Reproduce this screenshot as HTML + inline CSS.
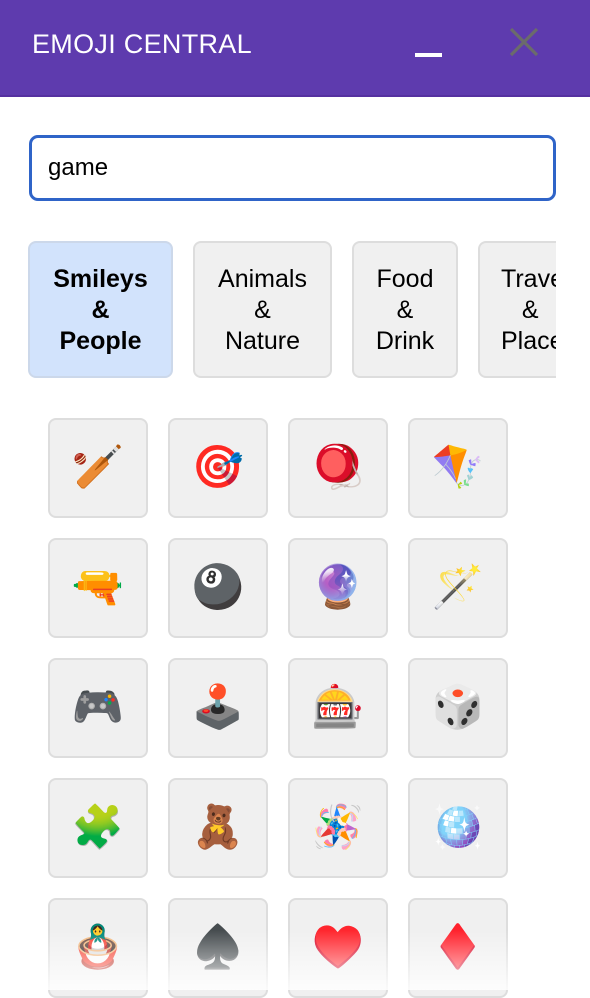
<!DOCTYPE html>
<html><head><meta charset="utf-8"><style>
*{box-sizing:border-box;margin:0;padding:0}
body{width:590px;height:990px;overflow:hidden;background:#fff;font-family:"Liberation Sans",sans-serif;position:relative}
.hdr{position:absolute;left:0;top:0;width:590px;height:97px;background:#5e3bae;border-bottom:2px solid #5530a0}
.title{position:absolute;left:32px;top:29px;color:#fff;font-size:27px;letter-spacing:0.3px}
.min{position:absolute;left:415px;top:53px;width:27px;height:4px;background:#fff}
.x{position:absolute;left:508px;top:26px}
.search{position:absolute;left:29px;top:135px;width:527px;height:66px;border:3px solid #2f64c8;border-radius:9px;font-size:24px;padding:16px 0 0 16px;color:#000}
.cat{position:absolute;top:241px;height:137px;border:2px solid #ddd;border-radius:8px;background:#f0f0f0;font-size:25px;text-align:center;line-height:31px;padding-top:21px;overflow:hidden}
.cat.sel{background:#d2e3fc;font-weight:bold;border-color:#ccd8ea}
.clip{position:absolute;left:0;top:230px;width:556px;height:160px;overflow:hidden}
.b{position:absolute;width:100px;height:100px;background:#f0f0f0;border:2px solid #ddd;border-radius:8px;font-size:42px;text-align:center;line-height:96px;font-family:"Noto Color Emoji","DejaVu Sans",sans-serif}
.fade{position:absolute;left:0;top:930px;width:590px;height:60px;background:linear-gradient(rgba(255,255,255,0),rgba(255,255,255,.85))}
</style></head><body>
<div class="hdr"><div class="title">EMOJI CENTRAL</div><div class="min"></div>
<svg class="x" width="32" height="32" viewBox="0 0 32 32"><path d="M3 3L29 29M29 3L3 29" stroke="#6b6b6b" stroke-width="3.2"/></svg></div>
<div class="search">game</div>
<div class="clip">
<div class="cat sel" style="left:28px;width:145px;top:11px">Smileys<br>&amp;<br>People</div>
<div class="cat" style="left:193px;width:139px;top:11px">Animals<br>&amp;<br>Nature</div>
<div class="cat" style="left:352px;width:106px;top:11px">Food<br>&amp;<br>Drink</div>
<div class="cat" style="left:478px;width:110px;top:11px;text-align:left;padding-left:21px">Travel<br>&nbsp;&nbsp;&nbsp;&amp;<br>Places</div>
</div>
<div class="b" style="left:48px;top:418px">🏏</div><div class="b" style="left:168px;top:418px">🎯</div><div class="b" style="left:288px;top:418px">🪀</div><div class="b" style="left:408px;top:418px">🪁</div>
<div class="b" style="left:48px;top:538px">🔫</div><div class="b" style="left:168px;top:538px">🎱</div><div class="b" style="left:288px;top:538px">🔮</div><div class="b" style="left:408px;top:538px">🪄</div>
<div class="b" style="left:48px;top:658px">🎮</div><div class="b" style="left:168px;top:658px">🕹</div><div class="b" style="left:288px;top:658px">🎰</div><div class="b" style="left:408px;top:658px">🎲</div>
<div class="b" style="left:48px;top:778px">🧩</div><div class="b" style="left:168px;top:778px">🧸</div><div class="b" style="left:288px;top:778px">🪅</div><div class="b" style="left:408px;top:778px">🪩</div>
<div class="b" style="left:48px;top:898px">🪆</div><div class="b" style="left:168px;top:898px">♠</div><div class="b" style="left:288px;top:898px;color:#c0161b">♥</div><div class="b" style="left:408px;top:898px;color:#d8261e">♦</div>
<div class="fade"></div>
</body></html>
